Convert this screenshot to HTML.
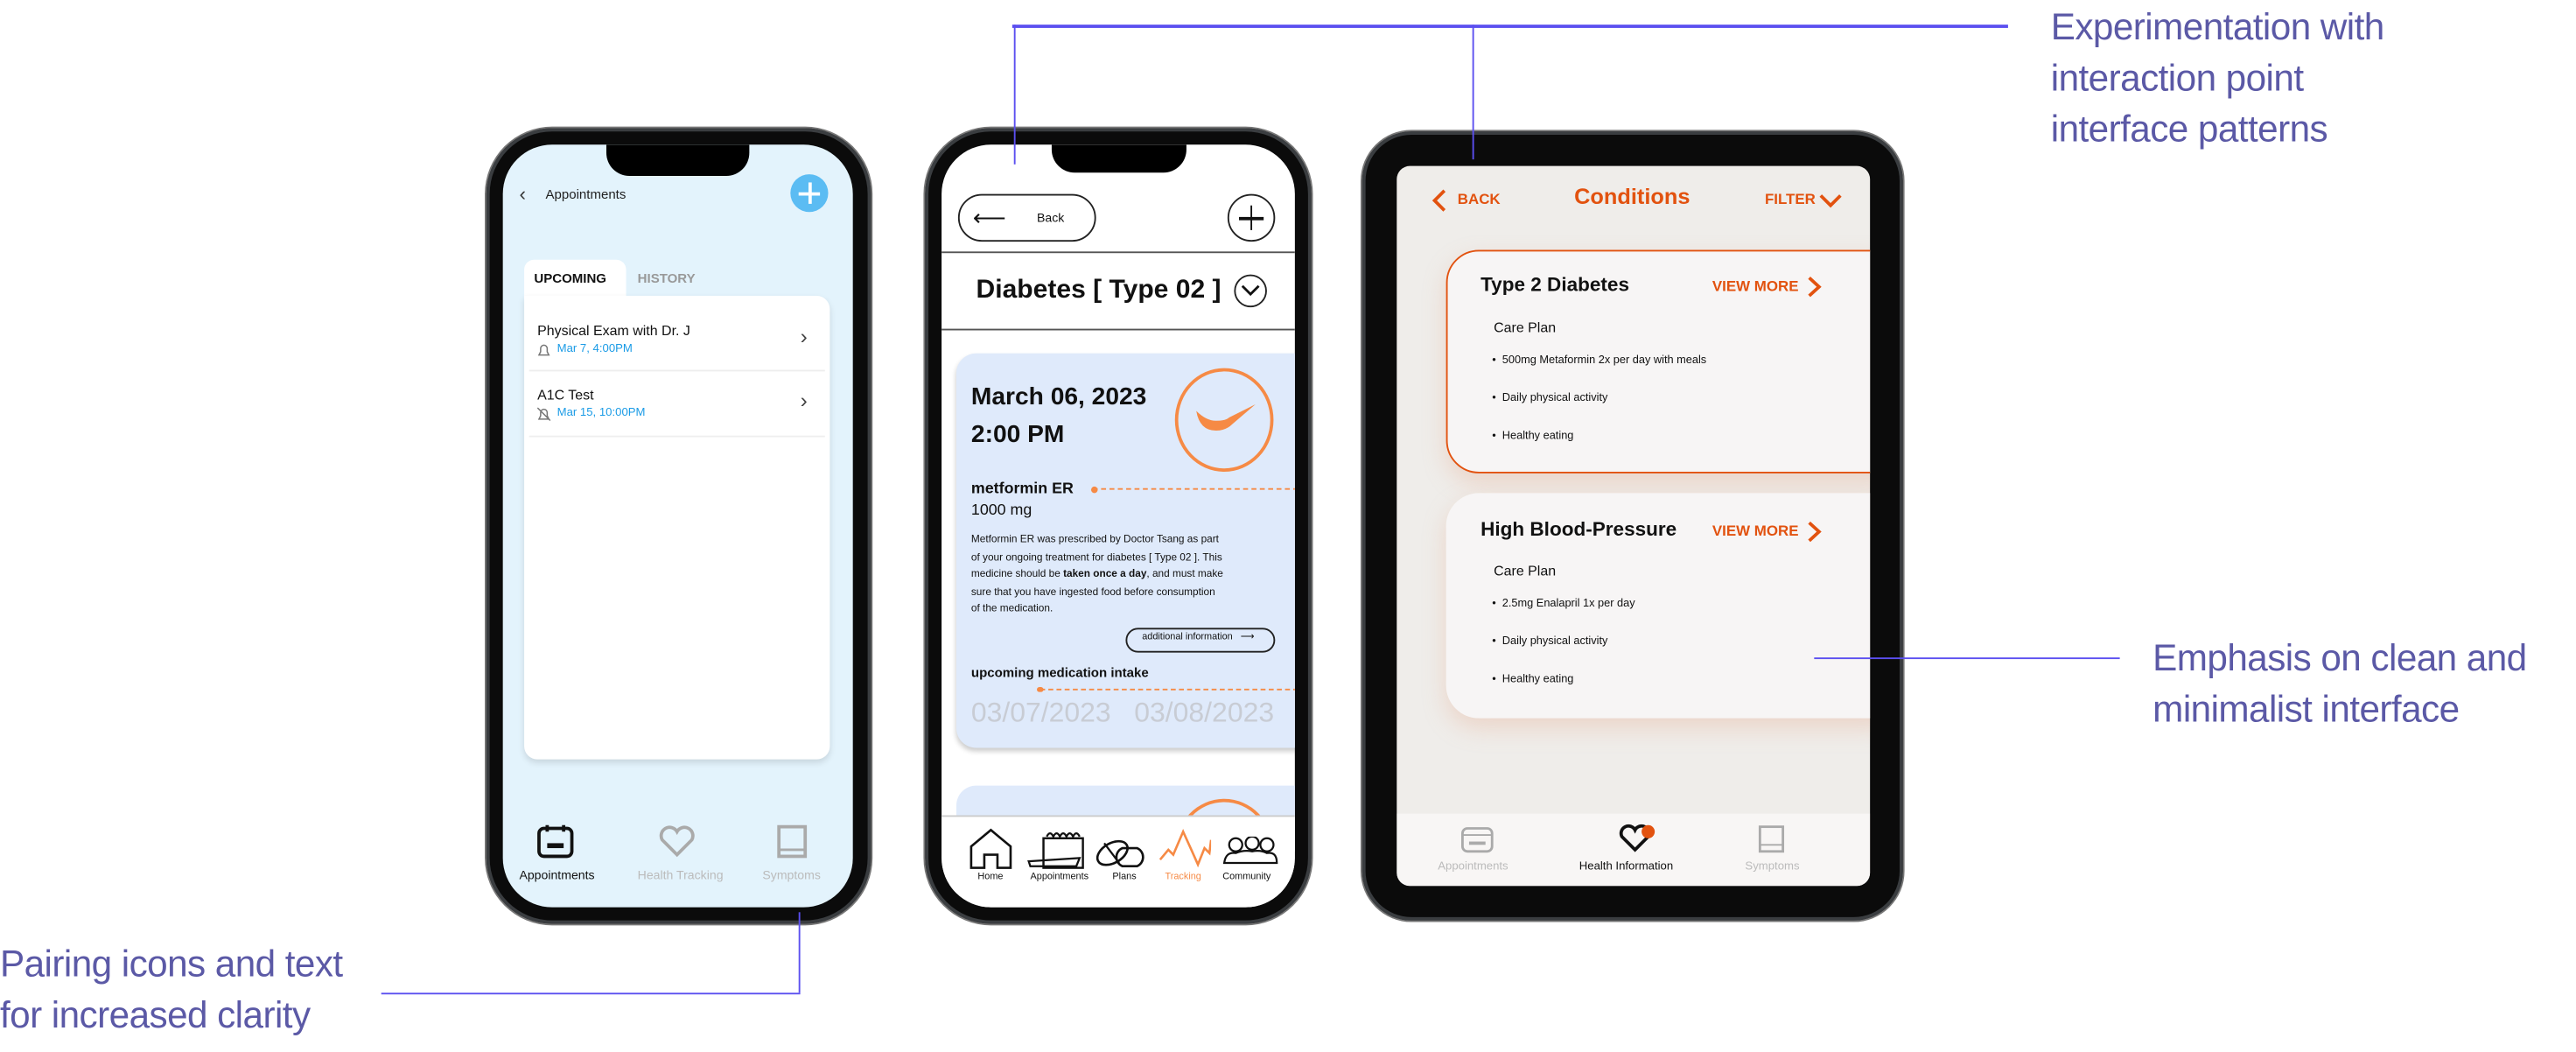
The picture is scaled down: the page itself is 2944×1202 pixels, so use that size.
<!DOCTYPE html>
<html><head><meta charset="utf-8"><style>
*{margin:0;padding:0;box-sizing:border-box}
html,body{width:2944px;height:1202px;overflow:hidden;background:#fff}
#w{position:absolute;left:0;top:0;width:1568px;height:640px;transform:scale(1.878);transform-origin:0 0;font-family:"Liberation Sans",sans-serif}
.a{position:absolute}
.ann{position:absolute;color:#5b59a6;font-size:22.5px;line-height:31px;letter-spacing:-0.3px}
.ln{position:absolute;background:#5b4ff0}
.phone{position:absolute;background:#0b0b0b;border-radius:40px;box-shadow:0 0 0 2px #3a3d40 inset,0 0 0 1px #777}
.scr{position:absolute;overflow:hidden;border-radius:30px}
.notch{position:absolute;background:#000;border-radius:0 0 14px 14px}
.t{position:absolute;white-space:nowrap}
</style></head><body><div id="w">

<div class="ann" style="left:1248px;top:1px">Experimentation with<br>interaction point<br>interface patterns</div>
<div class="ann" style="left:1310px;top:385px">Emphasis on clean and<br>minimalist interface</div>
<div class="ann" style="left:0;top:571px">Pairing icons and text<br>for increased clarity</div>

<!-- phone 1 -->
<div class="phone" style="left:296px;top:78px;width:234px;height:484px"></div>
<div class="scr" style="left:306px;top:88px;width:213px;height:464px;background:#e3f3fc">
  <div class="notch" style="left:63px;top:0;width:87px;height:19px"></div>
  <div class="t" style="left:10px;top:23px;font-size:12px;color:#333">&lsaquo;</div>
  <div class="t" style="left:26px;top:26px;font-size:8px;color:#222">Appointments</div>
  <div class="a" style="left:175px;top:18px;width:23px;height:23px;border-radius:50%;background:#5bbcf3"></div>
  <div class="a" style="left:180px;top:28.5px;width:13px;height:2px;background:#fff"></div>
  <div class="a" style="left:185.5px;top:23px;width:2px;height:13px;background:#fff"></div>
  <div class="a" style="left:13px;top:70px;width:62px;height:24px;background:#fff;border-radius:6px 6px 0 0"></div>
  <div class="t" style="left:19px;top:77px;font-size:8px;font-weight:bold;color:#111">UPCOMING</div>
  <div class="t" style="left:82px;top:77px;font-size:8px;font-weight:bold;color:#999">HISTORY</div>
  <div class="a" style="left:13px;top:92px;width:186px;height:282px;background:#fff;border-radius:0 8px 8px 8px;box-shadow:0 2px 4px rgba(0,0,0,.12)"></div>
  <div class="t" style="left:21px;top:108px;font-size:8.5px;color:#111">Physical Exam with Dr. J</div>
  <svg class="a" style="left:21px;top:121px" width="8" height="8"><path d="M1 7 L7 7 L6 5 L6 3 A2 2 0 0 0 2 3 L2 5Z" fill="none" stroke="#777" stroke-width=".8"/></svg>
  <div class="t" style="left:33px;top:121px;font-size:7px;color:#1a9be6">Mar 7, 4:00PM</div>
  <div class="t" style="left:181px;top:109px;font-size:13px;color:#444">&rsaquo;</div>
  <div class="a" style="left:16px;top:137px;width:180px;height:1px;background:#eee"></div>
  <div class="t" style="left:21px;top:147px;font-size:8.5px;color:#111">A1C Test</div>
  <svg class="a" style="left:21px;top:160px" width="8" height="8"><path d="M1 7 L7 7 L6 5 L6 3 A2 2 0 0 0 2 3 L2 5Z M0 0 L8 8" fill="none" stroke="#777" stroke-width=".8"/></svg>
  <div class="t" style="left:33px;top:160px;font-size:7px;color:#1a9be6">Mar 15, 10:00PM</div>
  <div class="t" style="left:181px;top:148px;font-size:13px;color:#444">&rsaquo;</div>
  <div class="a" style="left:16px;top:177px;width:180px;height:1px;background:#eee"></div>
  <svg class="a" style="left:20px;top:412px" width="24" height="24" viewBox="0 0 24 24"><rect x="2" y="4" width="20" height="17" rx="3" fill="none" stroke="#111" stroke-width="2"/><line x1="7" y1="2" x2="7" y2="6" stroke="#111" stroke-width="2"/><line x1="17" y1="2" x2="17" y2="6" stroke="#111" stroke-width="2"/><rect x="7" y="13" width="10" height="3" fill="#111"/></svg>
  <svg class="a" style="left:94px;top:414px" width="24" height="20" viewBox="0 0 24 20"><path d="M12 18 L3 9 A5 5 0 0 1 12 4 A5 5 0 0 1 21 9 Z" fill="none" stroke="#aaa" stroke-width="2"/></svg>
  <svg class="a" style="left:165px;top:413px" width="22" height="22" viewBox="0 0 22 22"><rect x="3" y="2" width="16" height="18" fill="none" stroke="#aaa" stroke-width="2"/><line x1="3" y1="16" x2="19" y2="16" stroke="#aaa" stroke-width="1.5"/></svg>
  <div class="t" style="left:10px;top:440px;font-size:7.5px;color:#111">Appointments</div>
  <div class="t" style="left:82px;top:440px;font-size:7.5px;color:#bbb">Health Tracking</div>
  <div class="t" style="left:158px;top:440px;font-size:7.5px;color:#bbb">Symptoms</div>
</div>

<!-- phone 2 -->
<div class="phone" style="left:563px;top:78px;width:235px;height:484px"></div>
<div class="scr" style="left:573px;top:88px;width:215px;height:464px;background:#fff">
  <div class="notch" style="left:67px;top:0;width:82px;height:17px"></div>
  <div class="a" style="left:10px;top:30px;width:84px;height:29px;border:1px solid #222;border-radius:15px"></div>
  <div class="t" style="left:19px;top:36px;font-size:14px;color:#111">&#x27F5;</div>
  <div class="t" style="left:58px;top:40px;font-size:7.5px;color:#111">Back</div>
  <div class="a" style="left:174px;top:30px;width:29px;height:29px;border:1px solid #222;border-radius:50%"></div>
  <div class="a" style="left:181px;top:44px;width:15px;height:1.5px;background:#111"></div>
  <div class="a" style="left:187.8px;top:37px;width:1.5px;height:15px;background:#111"></div>
  <div class="a" style="left:0;top:65px;width:215px;height:1px;background:#555"></div>
  <div class="t" style="left:21px;top:80px;font-size:16px;font-weight:bold;color:#111">Diabetes [ Type 02 ]</div>
  <div class="a" style="left:178px;top:79px;width:20px;height:20px;border:1px solid #222;border-radius:50%"></div>
  <svg class="a" style="left:182px;top:85px" width="12" height="8"><path d="M1 1 L6 6 L11 1" fill="none" stroke="#111" stroke-width="1.5"/></svg>
  <div class="a" style="left:0;top:112px;width:215px;height:1px;background:#555"></div>
  <div class="a" style="left:9px;top:127px;width:220px;height:240px;background:#dfeafb;border-radius:12px;box-shadow:0 2px 3px rgba(0,0,0,.2)"></div>
  <div class="t" style="left:18px;top:142px;font-size:15px;font-weight:bold;color:#111;line-height:23px">March 06, 2023<br>2:00 PM</div>
  <div class="a" style="left:142px;top:136px;width:60px;height:63px;border:2px solid #f68a45;border-radius:50%"></div>
  <svg class="a" style="left:153px;top:152px" width="40" height="30"><path d="M2 10 Q4 22 14 22 Q20 22 24 18 L38 6 L22 14 Q20 16 14 16 Q8 16 2 10Z" fill="#f68a45"/></svg>
  <div class="t" style="left:18px;top:204px;font-size:9.5px;font-weight:bold;color:#111">metformin ER</div>
  <div class="t" style="left:18px;top:217px;font-size:9.5px;color:#111">1000 mg</div>
  <div class="a" style="left:92px;top:209px;width:125px;border-top:1px dashed #f68a45"></div>
  <div class="a" style="left:91px;top:207.5px;width:4px;height:4px;border-radius:50%;background:#f68a45"></div>
  <div class="t" style="left:18px;top:236px;font-size:6.3px;line-height:10.6px;color:#111">Metformin ER was prescribed by Doctor Tsang as part<br>of your ongoing treatment for diabetes [ Type 02 ]. This<br>medicine should be <b>taken once a day</b>, and must make<br>sure that you have ingested food before consumption<br>of the medication.</div>
  <div class="a" style="left:112px;top:294px;width:91px;height:15px;border:1px solid #222;border-radius:8px"></div>
  <div class="t" style="left:122px;top:297px;font-size:5.8px;color:#111">additional information &nbsp;&nbsp;&#x27F6;</div>
  <div class="t" style="left:18px;top:317px;font-size:8px;font-weight:bold;color:#111">upcoming medication intake</div>
  <div class="a" style="left:60px;top:331px;width:157px;border-top:1px dashed #f68a45"></div>
  <div class="a" style="left:58px;top:329.5px;width:3.5px;height:3.5px;border-radius:50%;background:#f68a45"></div>
  <div class="t" style="left:18px;top:336px;font-size:17px;color:#c8ccd4">03/07/2023 &nbsp;&nbsp;03/08/2023</div>
  <div class="a" style="left:9px;top:390px;width:220px;height:40px;background:#dfeafb;border-radius:12px"></div>
  <div class="a" style="left:142px;top:398px;width:60px;height:63px;border:2px solid #f68a45;border-radius:50%"></div>
  <div class="a" style="left:0;top:408px;width:215px;height:60px;background:#fff;border-top:1px solid #ccc"></div>
  <svg class="a" style="left:16px;top:415px" width="28" height="26"><path d="M2 12 L14 2 L26 12 L26 25 L18 25 L18 17 L10 17 L10 25 L2 25 Z" fill="none" stroke="#111" stroke-width="1.4"/></svg>
  <svg class="a" style="left:52px;top:416px" width="36" height="25"><rect x="10" y="6" width="24" height="18" fill="none" stroke="#111" stroke-width="1.3"/><path d="M1 20 L32 18 L30 23 L2 23Z" fill="none" stroke="#111" stroke-width="1.2"/><path d="M12 5 q2 -4 4 0 q2 -4 4 0 q2 -4 4 0 q2 -4 4 0 q2 -4 4 0" fill="none" stroke="#111" stroke-width="1.2"/></svg>
  <svg class="a" style="left:93px;top:420px" width="32" height="20"><ellipse cx="11" cy="11" rx="10" ry="6" transform="rotate(-30 11 11)" fill="none" stroke="#111" stroke-width="1.4"/><line x1="6" y1="5" x2="15" y2="17" stroke="#111" stroke-width="1.2"/><path d="M17 19 A6 6 0 0 1 17 8 L26 8 A6 6 0 0 1 26 19Z" fill="none" stroke="#111" stroke-width="1.4"/></svg>
  <svg class="a" style="left:132px;top:415px" width="32" height="25"><path d="M1 20 L6 14 L9 17 L15 3 L20 14 L24 23 L28 13 L31 16 L32 8" fill="none" stroke="#f68a45" stroke-width="1.4"/></svg>
  <svg class="a" style="left:171px;top:421px" width="34" height="18"><circle cx="8" cy="5" r="4" fill="none" stroke="#111" stroke-width="1.2"/><circle cx="18" cy="4" r="4" fill="none" stroke="#111" stroke-width="1.2"/><circle cx="27" cy="5" r="4" fill="none" stroke="#111" stroke-width="1.2"/><path d="M1 16 Q2 9 8 10 Q13 8 18 9 Q23 8 27 10 Q33 9 33 16Z" fill="none" stroke="#111" stroke-width="1.2"/></svg>
  <div class="t" style="left:22px;top:443px;font-size:5.8px;color:#111">Home</div>
  <div class="t" style="left:54px;top:443px;font-size:5.8px;color:#111">Appointments</div>
  <div class="t" style="left:104px;top:443px;font-size:5.8px;color:#111">Plans</div>
  <div class="t" style="left:136px;top:443px;font-size:5.8px;color:#f68a45">Tracking</div>
  <div class="t" style="left:171px;top:443px;font-size:5.8px;color:#111">Community</div>
</div>

<!-- tablet -->
<div class="phone" style="left:829px;top:80px;width:329px;height:480px;border-radius:30px"></div>
<div class="scr" style="left:850px;top:101px;width:288px;height:438px;background:#efedea;border-radius:8px">
  <svg class="a" style="left:21px;top:14px" width="10" height="14"><path d="M8 1 L2 7 L8 13" fill="none" stroke="#e2520f" stroke-width="2"/></svg>
  <div class="t" style="left:37px;top:15px;font-size:9px;font-weight:bold;color:#e2520f">BACK</div>
  <div class="t" style="left:108px;top:11px;font-size:13.5px;font-weight:bold;color:#e2520f">Conditions</div>
  <div class="t" style="left:224px;top:15px;font-size:9px;font-weight:bold;color:#e2520f">FILTER</div>
  <svg class="a" style="left:257px;top:16px" width="14" height="10"><path d="M1 2 L7 8 L13 2" fill="none" stroke="#e2520f" stroke-width="2"/></svg>
  <div class="a" style="left:30px;top:51px;width:280px;height:136px;background:#f7f5f5;border:1.5px solid #e2520f;border-radius:20px;box-shadow:0 6px 14px rgba(230,170,140,.35)"></div>
  <div class="t" style="left:51px;top:65px;font-size:12px;font-weight:bold;color:#111">Type 2 Diabetes</div>
  <div class="t" style="left:192px;top:68px;font-size:9px;font-weight:bold;color:#e2520f">VIEW MORE</div>
  <svg class="a" style="left:250px;top:67px" width="9" height="13"><path d="M1 1 L7 6.5 L1 12" fill="none" stroke="#e2520f" stroke-width="2"/></svg>
  <div class="t" style="left:59px;top:93px;font-size:8.5px;color:#111">Care Plan</div>
  <div class="t" style="left:58px;top:115px;font-size:6.8px;color:#111">&bull;&nbsp; 500mg Metaformin 2x per day with meals</div>
  <div class="t" style="left:58px;top:138px;font-size:6.8px;color:#111">&bull;&nbsp; Daily physical activity</div>
  <div class="t" style="left:58px;top:161px;font-size:6.8px;color:#111">&bull;&nbsp; Healthy eating</div>
  <div class="a" style="left:30px;top:199px;width:280px;height:137px;background:#f7f5f5;border-radius:20px;box-shadow:0 6px 14px rgba(230,170,140,.35)"></div>
  <div class="t" style="left:51px;top:214px;font-size:12px;font-weight:bold;color:#111">High Blood-Pressure</div>
  <div class="t" style="left:192px;top:217px;font-size:9px;font-weight:bold;color:#e2520f">VIEW MORE</div>
  <svg class="a" style="left:250px;top:216px" width="9" height="13"><path d="M1 1 L7 6.5 L1 12" fill="none" stroke="#e2520f" stroke-width="2"/></svg>
  <div class="t" style="left:59px;top:241px;font-size:8.5px;color:#111">Care Plan</div>
  <div class="t" style="left:58px;top:263px;font-size:6.8px;color:#111">&bull;&nbsp; 2.5mg Enalapril 1x per day</div>
  <div class="t" style="left:58px;top:286px;font-size:6.8px;color:#111">&bull;&nbsp; Daily physical activity</div>
  <div class="t" style="left:58px;top:309px;font-size:6.8px;color:#111">&bull;&nbsp; Healthy eating</div>
  <div class="a" style="left:0;top:394px;width:288px;height:44px;background:#f8f6f5"></div>
  <svg class="a" style="left:39px;top:400px" width="20" height="18"><rect x="1" y="3" width="18" height="14" rx="3" fill="none" stroke="#aaa" stroke-width="1.5"/><line x1="1" y1="7" x2="19" y2="7" stroke="#aaa"/><rect x="5" y="11" width="10" height="2" fill="#aaa"/></svg>
  <svg class="a" style="left:134px;top:400px" width="24" height="18"><path d="M11 16 L3 8 A4 4 0 0 1 11 4 A4 4 0 0 1 19 8Z" fill="none" stroke="#111" stroke-width="2"/><circle cx="19" cy="5" r="4" fill="#e2520f"/></svg>
  <svg class="a" style="left:220px;top:401px" width="16" height="17"><rect x="1" y="1" width="14" height="15" fill="none" stroke="#aaa" stroke-width="1.5"/><line x1="1" y1="12" x2="15" y2="12" stroke="#aaa"/></svg>
  <div class="t" style="left:25px;top:423px;font-size:7px;color:#bbb">Appointments</div>
  <div class="t" style="left:111px;top:423px;font-size:7px;color:#111">Health Information</div>
  <div class="t" style="left:212px;top:423px;font-size:7px;color:#bbb">Symptoms</div>
</div>

<div class="ln" style="left:616px;top:15px;width:606px;height:2px"></div>
<div class="ln" style="left:617px;top:15px;width:1px;height:85px"></div>
<div class="ln" style="left:895.5px;top:15px;width:1px;height:82px"></div>
<div class="ln" style="left:1104px;top:399.5px;width:186px;height:1px"></div>
<div class="ln" style="left:232px;top:603.5px;width:255px;height:1.2px"></div>
<div class="ln" style="left:485.5px;top:555px;width:1.3px;height:49px"></div>

</div></body></html>
